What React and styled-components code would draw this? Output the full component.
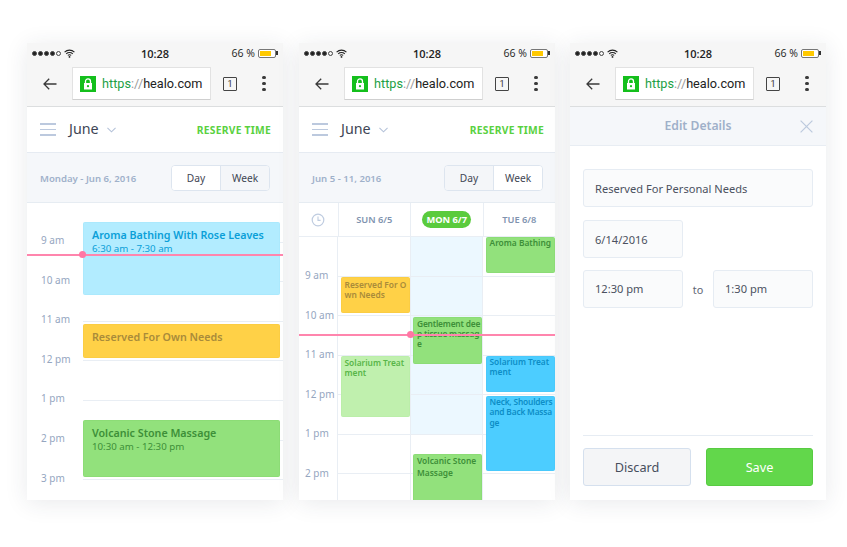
import React from 'react';
import styled, { createGlobalStyle } from 'styled-components';

const Global = createGlobalStyle`
  html, body {
    margin: 0;
    padding: 0;
    background: #fff;
  }
`;

const Page = styled.div`
  display: flex;
  gap: 15px;
  width: 847px;
  height: 547px;
  box-sizing: border-box;
  padding: 43px 0 0 27px;
  overflow: hidden;
  font-family: "Noto Sans", sans-serif;
`;

const Phone = styled.div`
  display: flex;
  flex-direction: column;
  width: 256px;
  height: 457px;
  margin-left: ${(p) => (p.$nudge ? 1 : 0)}px;
  background: #fff;
  overflow: hidden;
  box-shadow: 0 3px 22px rgba(40, 50, 70, 0.1);
`;

const Chrome = styled.div`
  flex: none;
  height: 64px;
  box-sizing: border-box;
  background: #f6f6f6;
  border-bottom: 1px solid #dcdedf;
`;

const StatusBar = styled.div`
  position: relative;
  display: flex;
  align-items: center;
  justify-content: space-between;
  height: 21px;
  box-sizing: border-box;
  padding: 0 5px 1px;
  font-family: "Open Sans", sans-serif;
  font-size: 10.5px;
  color: #222;
`;

const Signal = styled.div`
  display: flex;
  align-items: center;
  gap: 1px;
`;

const Dot = styled.span`
  width: 5px;
  height: 5px;
  box-sizing: border-box;
  border-radius: 50%;
  background: ${(p) => (p.$hollow ? 'transparent' : '#222')};
  border: 1px solid #444;
`;

const Clock = styled.div`
  position: absolute;
  left: 0;
  right: 0;
  text-align: center;
  font-weight: 600;
  font-size: 11px;
`;

const Battery = styled.div`
  display: flex;
  align-items: center;
  gap: 3px;
  margin-right: 1px;
  font-size: 10.5px;
  font-weight: 500;
`;

const Cell = styled.div`
  position: relative;
  width: 18px;
  height: 9px;
  box-sizing: border-box;
  border: 1px solid #777;
  border-radius: 2px;
  background: #fff;
  padding: 1px;
  margin-right: 1px;

  &::before {
    content: '';
    display: block;
    width: 11px;
    height: 5px;
    background: #ffc900;
  }

  &::after {
    content: '';
    position: absolute;
    right: -3px;
    top: 1.5px;
    width: 2px;
    height: 4px;
    background: #333;
  }
`;

const BrowserBar = styled.div`
  display: flex;
  align-items: center;
  height: 42px;
  padding: 0 0 3px 16px;
  box-sizing: border-box;
`;

const UrlBox = styled.div`
  display: flex;
  align-items: center;
  gap: 6px;
  width: 139px;
  height: 33px;
  box-sizing: border-box;
  margin-left: 15px;
  padding-left: 7px;
  background: #fff;
  border: 1px solid #e2e2e2;
  border-bottom-color: #cfcfcf;
  border-radius: 1px;
  font-family: Roboto, sans-serif;
  font-size: 12.7px;
  color: #222;
  white-space: nowrap;
`;

const LockBox = styled.div`
  display: flex;
  align-items: center;
  justify-content: center;
  width: 16px;
  height: 16px;
  background: #14bf1c;
`;

const Https = styled.span`
  color: #1d9f45;
`;

const Slash = styled.span`
  color: #9a9a9a;
`;

const TabCount = styled.div`
  display: flex;
  align-items: center;
  justify-content: center;
  width: 14px;
  height: 14px;
  box-sizing: border-box;
  margin-left: 12px;
  border: 1.5px solid #444;
  border-radius: 1px;
  font-family: Roboto, sans-serif;
  font-size: 9px;
  color: #333;
`;

const Kebab = styled.div`
  display: flex;
  flex-direction: column;
  gap: 2.5px;
  margin-left: 25px;
`;

const KebabDot = styled.span`
  width: 3.5px;
  height: 3.5px;
  border-radius: 50%;
  background: #3a3a3a;
`;

const AppHeader = styled.div`
  flex: none;
  display: flex;
  align-items: center;
  height: 46px;
  box-sizing: border-box;
  padding: 0 ${(p) => p.$inset - 1}px 0 13px;
  border-bottom: 1.5px solid #e6ebf2;
`;

const Burger = styled.div`
  display: flex;
  flex-direction: column;
  gap: 4px;
  width: 16px;
`;

const BurgerLine = styled.span`
  height: 1.5px;
  background: #bcc9de;
`;

const Month = styled.div`
  margin-left: 13px;
  padding-bottom: 3px;
  font-size: 14.3px;
  color: #3e4555;
`;

const ReserveLink = styled.div`
  margin-left: auto;
  font-size: 10.3px;
  font-weight: 700;
  letter-spacing: 0.25px;
  color: #5ad13f;
`;

const SubHeader = styled.div`
  flex: none;
  display: flex;
  align-items: center;
  justify-content: space-between;
  height: 50px;
  box-sizing: border-box;
  padding: 0 ${(p) => p.$inset}px 0 13px;
  background: #f5f7fa;
  border-bottom: 1px solid #e6ecf2;
`;

const DateLabel = styled.div`
  padding-top: 1px;
  font-size: 9.6px;
  font-weight: 600;
  color: #9fb1ca;
`;

const Toggle = styled.div`
  display: flex;
  width: 99px;
  height: 26px;
  box-sizing: border-box;
  background: #fff;
  border: 1px solid #dde5ef;
  border-radius: 4px;
  overflow: hidden;
`;

const ToggleItem = styled.div`
  flex: 1;
  display: flex;
  align-items: center;
  justify-content: center;
  font-size: 10.2px;
  color: #3f4654;
  background: ${(p) => (p.$active ? '#f4f6f9' : '#fff')};
  border-right: ${(p) => (p.$first ? '1px solid #dde5ef' : 'none')};
`;

const Timeline = styled.div`
  position: relative;
  flex: 1;
  display: flex;
  min-height: 0;
  overflow: hidden;
`;

const Hours = styled.div`
  flex: none;
  width: ${(p) => p.$width}px;
  box-sizing: border-box;
  padding-top: ${(p) => p.$top}px;
  padding-left: ${(p) => p.$left}px;
  font-size: 10px;
  color: #95a6bf;
`;

const HourLabel = styled.div`
  height: ${(p) => p.$h}px;
  line-height: ${(p) => p.$h}px;
  white-space: nowrap;
`;

const Track = styled.div`
  position: relative;
  flex: 1;
  min-width: 0;
`;

const GridRow = styled.div`
  height: ${(p) => p.$h}px;
  box-sizing: border-box;
  border-bottom: 1.5px solid #e9eef4;
  background: ${(p) => (p.$today ? '#ecf8ff' : 'transparent')};
`;

const tones = {
  sky: { bg: '#b2ecff', edge: '#abe9fd', fg: '#0a9fd8' },
  blue: { bg: '#4ccdff', edge: '#4ac9fb', fg: '#0d8dc6' },
  amber: { bg: '#ffd147', edge: '#fbcd43', fg: '#a98b3a' },
  green: { bg: '#92e17c', edge: '#8cdc76', fg: '#3d8f38' },
  mint: { bg: '#c0f0ae', edge: '#bbeea9', fg: '#58b648' },
};

const EventCard = styled.div`
  position: absolute;
  left: ${(p) => p.$left}px;
  right: ${(p) => p.$right}px;
  top: ${(p) => p.$top}px;
  height: ${(p) => p.$height}px;
  box-sizing: border-box;
  padding: ${(p) => p.$pad};
  overflow: hidden;
  border: 1px solid ${(p) => tones[p.$tone].edge};
  border-radius: 1.5px;
  background: ${(p) => tones[p.$tone].bg};
  color: ${(p) => tones[p.$tone].fg};
`;

const EventTitle = styled.div`
  font-size: 10.7px;
  line-height: 14px;
  font-weight: 600;
`;

const EventTime = styled.div`
  font-size: 9.7px;
  line-height: 14.5px;
`;

const WeekLine = styled.div`
  font-size: 8.4px;
  line-height: ${(p) => p.$lh || 10.4}px;
  font-weight: 600;
  white-space: nowrap;
  letter-spacing: ${(p) => (p.$tight ? -0.2 : 0)}px;
`;

const NowLine = styled.div`
  position: absolute;
  left: 0;
  right: 0;
  top: ${(p) => p.$top}px;
  height: 1.5px;
  background: #ff85ad;
  z-index: 2;

  &::after {
    content: '';
    position: absolute;
    left: ${(p) => p.$dot}px;
    top: -3px;
    width: 7px;
    height: 7px;
    border-radius: 50%;
    background: #ff77a4;
  }
`;

const WeekHead = styled.div`
  flex: none;
  display: grid;
  grid-template-columns: 38.5px 72.5px 72.5px 1fr;
  height: 34px;
  box-sizing: border-box;
  border-bottom: 1.5px solid #e9eef4;
`;

const HeadCell = styled.div`
  display: flex;
  align-items: center;
  justify-content: center;
  font-size: 9.3px;
  font-weight: 600;
  color: #7f93af;
  border-left: ${(p) => (p.$first ? 'none' : '1.5px solid #e9eef4')};
`;

const TodayPill = styled.span`
  padding: 2px 4px;
  border-radius: 9px;
  background: #5acb3d;
  color: #fff;
  font-weight: 700;
  line-height: 13px;
`;

const WeekColumn = styled.div`
  position: relative;
  flex: none;
  width: ${(p) => p.$width}px;
  box-sizing: border-box;
  border-left: 1.5px solid #e9eef4;
`;

const EditHeader = styled.div`
  position: relative;
  flex: none;
  display: flex;
  align-items: center;
  justify-content: center;
  height: 39px;
  box-sizing: border-box;
  padding-bottom: 1px;
  background: #f5f7fa;
  border-bottom: 1px solid #e8edf3;
  font-size: 12.2px;
  font-weight: 600;
  color: #9fb0c9;
`;

const CloseIcon = styled.svg`
  position: absolute;
  right: 13px;
  top: 13px;
`;

const EditBody = styled.div`
  flex: 1;
  display: flex;
  flex-direction: column;
  padding: 23px 13px 14px;
`;

const Field = styled.div`
  display: flex;
  align-items: center;
  width: ${(p) => p.$w}px;
  height: ${(p) => p.$h}px;
  box-sizing: border-box;
  padding: 0 11px;
  background: #fafbfc;
  border: 1px solid #e6ecf3;
  border-radius: 3px;
  font-size: 11.1px;
  color: #4b5160;
`;

const FieldRow = styled.div`
  display: flex;
  align-items: center;
  justify-content: space-between;
  margin-top: ${(p) => p.$mt}px;
`;

const ToWord = styled.span`
  padding-top: 1px;
  font-size: 10.8px;
  color: #5e6573;
`;

const Footer = styled.div`
  display: flex;
  justify-content: space-between;
  margin-top: auto;
  padding-top: 12px;
  border-top: 1px solid #e6ecf3;
`;

const ActionButton = styled.div`
  display: flex;
  align-items: center;
  justify-content: center;
  width: ${(p) => (p.$primary ? 107 : 108)}px;
  height: 38px;
  box-sizing: border-box;
  border-radius: 3px;
  font-size: 12.7px;
  background: ${(p) => (p.$primary ? '#62d74b' : '#f4f5f7')};
  color: ${(p) => (p.$primary ? '#fff' : '#474e5d')};
  border: 1px solid ${(p) => (p.$primary ? '#58cb42' : '#d5e0ee')};
`;

const WifiIcon = () => (
  <svg width="11" height="9" viewBox="0 0 11 9" style={{ marginLeft: 2 }}>
    <path d="M0.6 3.1C3.4 0.5 7.6 0.5 10.4 3.1M2.2 4.8C4 3.2 7 3.2 8.8 4.8M3.8 6.4C4.7 5.7 6.3 5.7 7.2 6.4" fill="none" stroke="#222" strokeWidth="1.1" />
    <circle cx="5.5" cy="7.9" r="0.9" fill="#222" />
  </svg>
);

const BackIcon = () => (
  <svg width="14" height="12" viewBox="0 0 14 12">
    <path d="M13.5 6H1.2M6.2 0.8L1 6l5.2 5.2" fill="none" stroke="#3a3a3a" strokeWidth="1.3" />
  </svg>
);

const LockIcon = () => (
  <svg width="10" height="12" viewBox="0 0 10 12">
    <path d="M2.5 5.2V3.4a2.5 2.5 0 0 1 5 0v1.8" fill="none" stroke="#fff" strokeWidth="1.3" />
    <path d="M1 5h8v6.5H1z" fill="#fff" />
    <circle cx="5" cy="8.2" r="1.1" fill="#14bf1c" />
  </svg>
);

const Chevron = () => (
  <svg width="9" height="6" viewBox="0 0 10 6" style={{ marginLeft: 8, marginTop: 1 }}>
    <path d="M0.5 0.7L5 5l4.5-4.3" fill="none" stroke="#b4c2d9" strokeWidth="1.2" />
  </svg>
);

const ClockIcon = () => (
  <svg width="14" height="14" viewBox="0 0 14 14">
    <circle cx="7" cy="7" r="5.8" fill="none" stroke="#bfcce0" strokeWidth="1.2" />
    <path d="M7 3.6V7.4H9.6" fill="none" stroke="#bfcce0" strokeWidth="1.1" />
  </svg>
);

const BrowserChrome = () => (
  <Chrome>
    <StatusBar>
      <Signal>
        <Dot />
        <Dot />
        <Dot />
        <Dot />
        <Dot $hollow />
        <WifiIcon />
      </Signal>
      <Clock>10:28</Clock>
      <Battery>
        66 %
        <Cell />
      </Battery>
    </StatusBar>
    <BrowserBar>
      <BackIcon />
      <UrlBox>
        <LockBox>
          <LockIcon />
        </LockBox>
        <span>
          <Https>https</Https>
          <Slash>://</Slash>
          healo.com
        </span>
      </UrlBox>
      <TabCount>1</TabCount>
      <Kebab>
        <KebabDot />
        <KebabDot />
        <KebabDot />
      </Kebab>
    </BrowserBar>
  </Chrome>
);

const CalendarTop = ({ date, active, inset }) => (
  <>
    <AppHeader $inset={inset}>
      <Burger>
        <BurgerLine />
        <BurgerLine />
        <BurgerLine />
      </Burger>
      <Month>June</Month>
      <Chevron />
      <ReserveLink>RESERVE TIME</ReserveLink>
    </AppHeader>
    <SubHeader $inset={inset}>
      <DateLabel>{date}</DateLabel>
      <Toggle>
        <ToggleItem $first $active={active === 'day'}>Day</ToggleItem>
        <ToggleItem $active={active === 'week'}>Week</ToggleItem>
      </Toggle>
    </SubHeader>
  </>
);

const dayHours = ['9 am', '10 am', '11 am', '12 pm', '1 pm', '2 pm', '3 pm'];
const weekHours = ['9 am', '10 am', '11 am', '12 pm', '1 pm', '2 pm'];

const dayEvents = [
  { id: 1, tone: 'sky', top: 19, height: 73, title: 'Aroma Bathing With Rose Leaves', time: '6:30 am - 7:30 am' },
  { id: 2, tone: 'amber', top: 121, height: 34, title: 'Reserved For Own Needs' },
  { id: 3, tone: 'green', top: 217, height: 57, title: 'Volcanic Stone Massage', time: '10:30 am - 12:30 pm' },
];

const DayView = () => (
  <Timeline>
    <Hours $width={56} $left={14} $top={18}>
      {dayHours.map((h) => <HourLabel key={h} $h={39.6}>{h}</HourLabel>)}
    </Hours>
    <Track>
      {dayHours.map((h) => <GridRow key={h} $h={39.6} />)}
      {dayEvents.map((e) => (
        <EventCard key={e.id} $tone={e.tone} $left={0} $right={3} $top={e.top} $height={e.height} $pad="5px 8px">
          <EventTitle>{e.title}</EventTitle>
          {e.time && <EventTime>{e.time}</EventTime>}
        </EventCard>
      ))}
    </Track>
    <NowLine $top={51} $dot={52} />
  </Timeline>
);

// titles are cut mid-word in the app, so the lines are kept as they appear
const weekColumns = [
  {
    id: 'sun',
    width: 72.5,
    events: [
      { id: 1, tone: 'amber', top: 40, height: 36, pad: 2, lines: ['Reserved For O', 'wn Needs'] },
      { id: 2, tone: 'mint', top: 119, height: 61, pad: 1, lines: ['Solarium Treat', 'ment'] },
    ],
  },
  {
    id: 'mon',
    width: 72.5,
    today: true,
    events: [
      { id: 1, tone: 'green', top: 79.5, height: 47.5, pad: 1, tight: true, lines: ['Gentlement dee', 'p tissue massag', 'e'] },
      { id: 2, tone: 'green', top: 217, height: 60, pad: 0, lh: 12, lines: ['Volcanic Stone', 'Massage'] },
    ],
  },
  {
    id: 'tue',
    width: 73,
    events: [
      { id: 1, tone: 'green', top: 0, height: 36, pad: 0, lines: ['Aroma Bathing'] },
      { id: 2, tone: 'blue', top: 119, height: 36, pad: 0, lines: ['Solarium Treat', 'ment'] },
      { id: 3, tone: 'blue', top: 159, height: 75, pad: 0, tight: true, lines: ['Neck, Shoulders', 'and Back Massa', 'ge'] },
    ],
  },
];

const rowIndexes = [0, 1, 2, 3, 4, 5, 6];

const WeekView = () => (
  <>
    <WeekHead>
      <HeadCell $first><ClockIcon /></HeadCell>
      <HeadCell>SUN 6/5</HeadCell>
      <HeadCell><TodayPill>MON 6/7</TodayPill></HeadCell>
      <HeadCell>TUE 6/8</HeadCell>
    </WeekHead>
    <Timeline>
      <Hours $width={38} $left={6} $top={19}>
        {weekHours.map((h) => <HourLabel key={h} $h={39.5}>{h}</HourLabel>)}
      </Hours>
      {weekColumns.map((col) => (
        <WeekColumn key={col.id} $width={col.width}>
          {rowIndexes.map((i) => <GridRow key={i} $h={39.5} $today={col.today && i < 5} />)}
          {col.events.map((e) => (
            <EventCard key={e.id} $tone={e.tone} $left={2.5} $right={0} $top={e.top} $height={e.height} $pad={`${e.pad}px 0 0 3px`}>
              {e.lines.map((line) => <WeekLine key={line} $lh={e.lh} $tight={e.tight}>{line}</WeekLine>)}
            </EventCard>
          ))}
        </WeekColumn>
      ))}
      <NowLine $top={97} $dot={108} />
    </Timeline>
  </>
);

const EditView = () => (
  <>
    <EditHeader>
      Edit Details
      <CloseIcon width="13" height="13" viewBox="0 0 13 13">
        <path d="M0.6 0.6l11.8 11.8M12.4 0.6L0.6 12.4" fill="none" stroke="#bccade" strokeWidth="1.2" />
      </CloseIcon>
    </EditHeader>
    <EditBody>
      <Field $w={230} $h={38}>Reserved For Personal Needs</Field>
      <FieldRow $mt={13}>
        <Field $w={100} $h={38}>6/14/2016</Field>
      </FieldRow>
      <FieldRow $mt={12}>
        <Field $w={100} $h={37.5}>12:30 pm</Field>
        <ToWord>to</ToWord>
        <Field $w={100} $h={37.5}>1:30 pm</Field>
      </FieldRow>
      <Footer>
        <ActionButton>Discard</ActionButton>
        <ActionButton $primary>Save</ActionButton>
      </Footer>
    </EditBody>
  </>
);

const App = () => (
  <Page>
    <Global />
    <Phone>
      <BrowserChrome />
      <CalendarTop date="Monday - Jun 6, 2016" active="week" inset={13} />
      <DayView />
    </Phone>
    <Phone $nudge>
      <BrowserChrome />
      <CalendarTop date="Jun 5 - 11, 2016" active="day" inset={12} />
      <WeekView />
    </Phone>
    <Phone>
      <BrowserChrome />
      <EditView />
    </Phone>
  </Page>
);

export default App;
